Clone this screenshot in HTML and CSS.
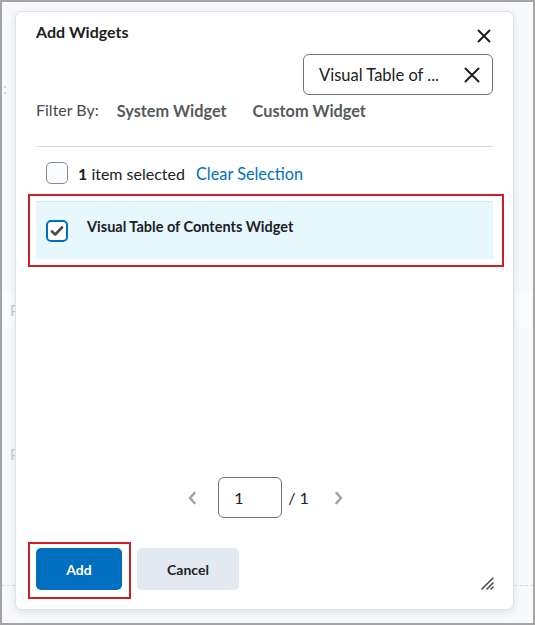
FILE: index.html
```html
<!DOCTYPE html>
<html lang="en">

<head>
  <meta charset="UTF-8">
  <meta name="viewport" content="width=device-width, initial-scale=1.0">
  <title>Add Widgets</title>
  <link rel="stylesheet" href="styles.css">
</head>

<body>
  <!-- page behind the dialog, mostly covered -->
  <div class="backdrop">
    <div class="backdrop__label">:</div>
    <div class="backdrop__row">Panel</div>
    <div class="backdrop__row backdrop__row--low">Panel</div>
    <div class="backdrop__rule"></div>
  </div>

  <div class="dialog" role="dialog" aria-label="Add Widgets">
    <div class="dialog__header">
      <h2 class="dialog__title">Add Widgets</h2>
      <button class="icon-btn dialog__close" aria-label="Close">
        <svg width="14" height="14" viewBox="0 0 14 14">
          <path d="M1.5 1.5 12.5 12.5M12.5 1.5 1.5 12.5" stroke="#202122" stroke-width="2" stroke-linecap="round" />
        </svg>
      </button>
    </div>

    <div class="search-row">
      <div class="search">
        <span class="search__text">Visual Table of ...</span>
        <button class="icon-btn search__clear" aria-label="Clear search">
          <svg width="16" height="16" viewBox="0 0 16 16">
            <path d="M1.5 1.5 14.5 14.5M14.5 1.5 1.5 14.5" stroke="#202122" stroke-width="2" stroke-linecap="round" />
          </svg>
        </button>
      </div>
    </div>

    <div class="filters">
      <span class="filters__label">Filter By:</span>
      <button class="filter-btn">System Widget</button>
      <button class="filter-btn">Custom Widget</button>
    </div>

    <hr class="divider">

    <div class="selection">
      <span class="checkbox"></span>
      <span class="selection__count"><b>1</b> item selected</span>
      <a class="selection__clear" href="#">Clear Selection</a>
    </div>

    <div class="callout callout--row">
      <div class="widget-row">
        <span class="checkbox checkbox--checked">
          <svg width="14" height="12" viewBox="0 0 14 12">
            <path d="M2 6.5 5.2 9.5 12 2.5" fill="none" stroke="#494c4e" stroke-width="2.6" stroke-linecap="round" stroke-linejoin="round" />
          </svg>
        </span>
        <span class="widget-row__name">Visual Table of Contents Widget</span>
      </div>
    </div>

    <div class="pager">
      <button class="icon-btn pager__arrow" aria-label="Previous page">
        <svg width="10" height="14" viewBox="0 0 10 14">
          <path d="M7.5 2 3 7l4.5 5" fill="none" stroke="#a0a4a7" stroke-width="2.6" stroke-linecap="round" stroke-linejoin="round" />
        </svg>
      </button>
      <span class="pager__input">1</span>
      <span class="pager__total">/ 1</span>
      <button class="icon-btn pager__arrow" aria-label="Next page">
        <svg width="10" height="14" viewBox="0 0 10 14">
          <path d="M2.5 2 7 7l-4.5 5" fill="none" stroke="#a0a4a7" stroke-width="2.6" stroke-linecap="round" stroke-linejoin="round" />
        </svg>
      </button>
    </div>

    <div class="dialog__footer">
      <div class="callout callout--btn">
        <button class="btn btn--primary">Add</button>
      </div>
      <button class="btn btn--secondary">Cancel</button>
    </div>

    <svg class="dialog__resize" width="14" height="14" viewBox="0 0 14 14">
      <path d="M2 13 13 2M7 13 13 7M11 13 13 11" stroke="#494c4e" stroke-width="1.6" stroke-linecap="round" />
    </svg>
  </div>
</body>

</html>
```

FILE: styles.css
```css
* {
  box-sizing: border-box;
}

html,
body {
  margin: 0;
  height: 100%;
}

body {
  position: relative;
  border: 2px solid #a4a4a4;
  background-color: #f8f9fc;
  font-family: Lato, 'Noto Sans', sans-serif;
  color: #202122;
  overflow: hidden;
}

button {
  font-family: inherit;
  border: 0;
  background: none;
  padding: 0;
  margin: 0;
  cursor: pointer;
}

.icon-btn {
  display: flex;
  align-items: center;
  justify-content: center;
}

/* faded page under the dialog */
.backdrop {
  color: #c9ced3;
  font-size: 15px;
}

.backdrop__label {
  padding-top: 77px;
  padding-left: 1px;
  color: #b3cfe6;
}

.backdrop__row {
  margin-top: 196px;
  padding: 8px;
  background-color: #fbfcfe;
}

.backdrop__row--low {
  margin-top: 110px;
  background: none;
}

.backdrop__rule {
  margin-top: 114px;
  border-top: 1px dashed #d6dbe1;
}

/* dialog */
.dialog {
  position: absolute;
  left: 13px;
  top: 9px;
  width: 499px;
  height: 599px;
  display: flex;
  flex-direction: column;
  padding: 0 20px 10px;
  background-color: #fff;
  border: 1px solid #dde2e9;
  border-radius: 7px;
  box-shadow: 0 2px 8px rgba(0, 0, 0, 0.1);
}

.dialog__header {
  display: flex;
  justify-content: space-between;
  align-items: flex-start;
}

.dialog__title {
  margin: 8px 0 0;
  font-size: 16px;
  line-height: 24px;
  font-weight: 700;
}

.dialog__close {
  width: 24px;
  height: 24px;
  margin: 12px -3px 0 0;
}

.search-row {
  display: flex;
  justify-content: flex-end;
  margin-top: 6px;
}

.search {
  display: flex;
  align-items: center;
  justify-content: space-between;
  width: 190px;
  height: 41px;
  padding: 0 12px 0 15px;
  border: 1px solid #6e7376;
  border-radius: 6px;
}

.search__text {
  font-size: 16.5px;
}

.filters {
  display: flex;
  align-items: center;
  margin-top: 5px;
  font-size: 16px;
  line-height: 20px;
}

.filters__label {
  color: #494c4e;
  margin-right: 18px;
}

.filter-btn {
  font-size: 16.3px;
  font-weight: 700;
  color: #565a5c;
  margin-right: 26px;
}

.divider {
  margin: 26px 0 0;
  border: 0;
  border-top: 1px solid #d3d9e3;
}

.selection {
  display: flex;
  align-items: center;
  margin-top: 15px;
  padding-left: 10px;
  font-size: 16px;
}

.checkbox {
  display: inline-flex;
  align-items: center;
  justify-content: center;
  flex-shrink: 0;
  width: 22px;
  height: 22px;
  border: 1px solid #868c8f;
  border-radius: 5px;
  background-color: #f9fbff;
}

.checkbox--checked {
  border: 2px solid #006fbf;
  background-color: #fff;
}

.selection__count {
  margin-left: 10px;
  color: #202122;
}

.selection__clear {
  margin-left: 11px;
  color: #006fbf;
  text-decoration: none;
  font-size: 16.3px;
}

/* red outline boxes */
.callout {
  border: 2px solid #cd2026;
}

.callout--row {
  margin: 10px -11px 0 -8px;
  padding: 5px 9px 6px 6px;
}

.callout--btn {
  margin-left: -8px;
  padding: 4px 7px 7px 6px;
}

.widget-row {
  display: flex;
  align-items: center;
  height: 58px;
  padding-left: 10px;
  background-color: #e6f7fe;
  border-top: 1px solid #d6ebf5;
}

.widget-row__name {
  margin: -8px 0 0 19px;
  font-size: 14.5px;
  font-weight: 700;
}

/* pagination */
.pager {
  display: flex;
  align-items: center;
  justify-content: center;
  margin-top: auto;
  margin-left: 2px;
}

.pager__arrow {
  width: 20px;
  height: 20px;
}

.pager__input {
  width: 64px;
  height: 41px;
  margin: 0 6px 0 16px;
  padding-left: 15px;
  display: flex;
  align-items: center;
  border: 1px solid #6e7376;
  border-radius: 6px;
  font-size: 16px;
}

.pager__total {
  font-size: 16px;
  margin-right: 20px;
}

.dialog__footer {
  display: flex;
  align-items: flex-start;
  margin-top: 24px;
}

.btn {
  height: 42px;
  border-radius: 5px;
  font-size: 14px;
  font-weight: 700;
}

.btn--primary {
  width: 86px;
  background-color: #006fbf;
  color: #fff;
}

.btn--secondary {
  width: 102px;
  margin: 6px 0 0 6px;
  background-color: #e3e9f1;
  color: #202122;
}

.dialog__resize {
  position: absolute;
  right: 19px;
  bottom: 19px;
}
```
